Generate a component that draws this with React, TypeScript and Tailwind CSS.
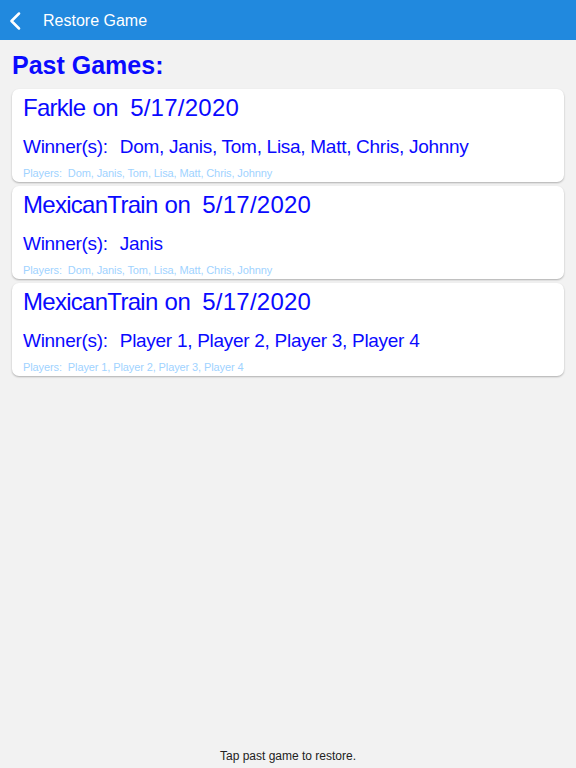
interface PastGame {
  game: string;
  date: string;
  winners: string[];
  players: string[];
}

const games: PastGame[] = [
  {
    game: 'Farkle',
    date: '5/17/2020',
    winners: ['Dom', 'Janis', 'Tom', 'Lisa', 'Matt', 'Chris', 'Johnny'],
    players: ['Dom', 'Janis', 'Tom', 'Lisa', 'Matt', 'Chris', 'Johnny'],
  },
  {
    game: 'MexicanTrain',
    date: '5/17/2020',
    winners: ['Janis'],
    players: ['Dom', 'Janis', 'Tom', 'Lisa', 'Matt', 'Chris', 'Johnny'],
  },
  {
    game: 'MexicanTrain',
    date: '5/17/2020',
    winners: ['Player 1', 'Player 2', 'Player 3', 'Player 4'],
    players: ['Player 1', 'Player 2', 'Player 3', 'Player 4'],
  },
];

const GameCard = ({ g }: { g: PastGame }) => (
  <div className="bg-white rounded-[7px] shadow-[0_1px_2px_rgba(0,0,0,0.28)] px-[11px] h-[93px] flex flex-col cursor-pointer">
    <div className="text-[24px] leading-none text-[#0a0aff] mt-[7px] flex">
      <span className="tracking-[-0.03em]">{g.game}</span>
      <span className="ml-[7px] tracking-[-0.02em]">on</span>
      <span className="ml-[12px] tracking-[0.01em]">{g.date}</span>
    </div>
    <div className="text-[19px] leading-none text-[#0a0aff] mt-[17px] flex tracking-[-0.015em]">
      <span>Winner(s):</span>
      <span className="ml-[12px]">{g.winners.join(', ')}</span>
    </div>
    <div className="text-[11px] leading-none text-[#9fd3ff] mt-[12px] flex tracking-[-0.01em]">
      <span>Players:</span>
      <span className="ml-[6px]">{g.players.join(', ')}</span>
    </div>
  </div>
);

export default function App() {
  return (
    <div
      className="w-[576px] h-[768px] bg-[#f2f2f2] flex flex-col"
      style={{ fontFamily: '"Liberation Sans", Arial, sans-serif' }}
    >
      {/* Barra de navegação */}
      <div className="h-10 bg-[#2189de] flex items-center text-white shrink-0">
        <svg width="12" height="18" viewBox="0 0 12 18" className="ml-[9px] mt-[2px]" fill="none">
          <path d="M10 1.5 L2.5 9 L10 16.5" stroke="white" strokeWidth="2.5" strokeLinecap="round" strokeLinejoin="round" />
        </svg>
        <span className="ml-[22px] text-[16px] pt-[2px]">Restore Game</span>
      </div>

      <h1 className="text-[25px] font-bold text-[#0a0aff] leading-none px-3 mt-[13px] mb-[11px]">Past Games:</h1>

      <div className="flex flex-col gap-1 px-3">
        {games.map((g, idx) => (
          <GameCard key={idx} g={g} />
        ))}
      </div>

      <div className="flex-1" />
      <p className="text-center text-[12px] leading-none text-[#222] pb-[6px]">Tap past game to restore.</p>
    </div>
  );
}
